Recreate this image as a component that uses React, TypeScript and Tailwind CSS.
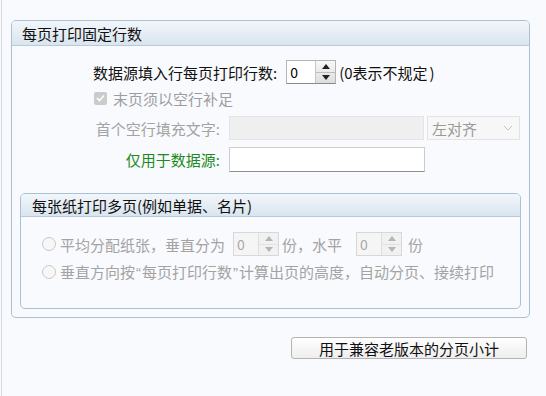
import React from "react";

const font = { fontFamily: '"Noto Sans CJK SC", "Noto Sans", sans-serif' };
const latin = { fontFamily: '"Liberation Sans", sans-serif' };

function Spinner({ disabled, w }: { disabled?: boolean; w: number }) {
  const tri = disabled ? "#b5b5b5" : "#222";
  return (
    <div
      className={`flex h-[24px] border ${disabled ? "border-[#d8d8d8] bg-[#f5f5f5]" : "border-[#b4b4b4] border-b-[#8a8a8a] bg-white"}`}
      style={{ width: w }}
    >
      <div className={`flex-1 flex items-center pl-[3px] text-[14px] leading-none ${disabled ? "text-[#a8a8a8]" : "text-black"}`}>0</div>
      <div className={`w-[20px] flex flex-col border-l ${disabled ? "border-[#dedede] bg-[#f1f1f1]" : "border-[#c6c6c6] bg-gradient-to-b from-[#f7f7f7] to-[#dedede]"}`}>
        <div className={`flex-1 flex items-center justify-center border-b ${disabled ? "border-[#e2e2e2]" : "border-[#bdbdbd]"}`}>
          <svg width="8" height="5" viewBox="0 0 8 5"><path d="M0 5 L4 0 L8 5 Z" fill={tri} /></svg>
        </div>
        <div className="flex-1 flex items-center justify-center">
          <svg width="8" height="5" viewBox="0 0 8 5"><path d="M0 0 L4 5 L8 0 Z" fill={tri} /></svg>
        </div>
      </div>
    </div>
  );
}

function Radio() {
  return <div className="w-[14px] h-[14px] rounded-full border border-[#c9c9c9] bg-[#f7f7f7]" />;
}

export default function App() {
  return (
    <div className="w-[546px] h-[396px] bg-[#f9fafd] flex" style={font}>
      <div className="w-[1px] ml-[1px] bg-[#d6dbe2]" />
      <div className="flex flex-col">
        <div className="mt-[20px] ml-[9px] w-[519px] h-[298px] border border-[#a9c1d5] rounded-[5px] overflow-hidden flex flex-col">
          <div className="h-[25px] shrink-0 bg-gradient-to-b from-[#f2f6fa] to-[#d9e5ef] border-b border-[#b6cadb] flex items-center pl-[10px] text-[15px] text-[#111] leading-none">
            每页打印固定行数
          </div>
          <div className="flex flex-col text-[15px] leading-none">
            <div className="mt-[14px] h-[24px] flex items-center pl-[81px]">
              <span className="text-[#111]">数据源填入行每页打印行数:</span>
              <div className="ml-[9px]"><Spinner w={50} /></div>
              <span className="ml-[3px] text-[#111]">(0表示不规定<span className="ml-[2px]">)</span></span>
            </div>
            <div className="mt-[4px] h-[20px] flex items-center pl-[82px]">
              <div className="w-[13px] h-[13px] rounded-[2px] bg-[#cbcbcb] flex items-center justify-center">
                <svg width="9" height="8" viewBox="0 0 9 8"><path d="M1 4 L3.5 6.5 L8 1.5" stroke="#fff" strokeWidth="1.6" fill="none" /></svg>
              </div>
              <span className="ml-[6px] text-[#9d9d9d]">末页须以空行补足</span>
            </div>
            <div className="mt-[8px] h-[24px] flex items-center">
              <div className="w-[208px] text-right text-[#a3a3a3]">首个空行填充文字:</div>
              <div className="ml-[9px] w-[195px] h-[24px] bg-[#efefef] border border-[#e4e4e4]" />
              <div className="ml-[3px] w-[93px] h-[24px] bg-[#f7f7f7] border border-[#e3e3e3] flex items-center justify-between pl-[4px] pr-[6px]">
                <span className="text-[#9a9a9a]">左对齐</span>
                <svg width="10" height="6" viewBox="0 0 10 6"><path d="M1 1 L5 5 L9 1" stroke="#c4c4c4" strokeWidth="1" fill="none" /></svg>
              </div>
            </div>
            <div className="mt-[7px] h-[25px] flex items-center">
              <div className="w-[208px] text-right text-[#1d8a1d]">仅用于数据源:</div>
              <div className="ml-[9px] w-[196px] h-[25px] bg-white border border-[#cdcdcd] border-b-[#8f8f8f]" />
            </div>
            <div className="mt-[21px] ml-[8px] w-[501px] h-[116px] border border-[#a9c1d5] rounded-[5px] overflow-hidden flex flex-col">
              <div className="h-[23px] shrink-0 bg-gradient-to-b from-[#f2f6fa] to-[#d9e5ef] border-b border-[#b6cadb] flex items-center pl-[11px] text-[#111]">
                每张纸打印多页(例如单据、名片)
              </div>
              <div className="mt-[15px] h-[24px] flex items-center pl-[21px] text-[#a3a3a3]">
                <Radio />
                <span className="ml-[4px]">平均分配纸张，垂直分为</span>
                <div className="ml-[8px]"><Spinner disabled w={46} /></div>
                <span className="ml-[3px]">份，水平</span>
                <div className="ml-[14px]"><Spinner disabled w={46} /></div>
                <span className="ml-[6px]">份</span>
              </div>
              <div className="mt-[6px] h-[20px] flex items-center pl-[21px] text-[#a3a3a3]">
                <Radio />
                <span className="ml-[4px]">
                  垂直方向按<span className="mx-[1px]" style={latin}>“</span>每页打印行数<span className="mx-[1px]" style={latin}>”</span>计算出页的高度，自动分页、接续打印
                </span>
              </div>
            </div>
          </div>
        </div>
        <div className="mt-[19px] ml-[289px] w-[236px] h-[22px] border border-[#b3b3b3] rounded-[3px] bg-gradient-to-b from-[#ffffff] to-[#eeeeee] flex items-center justify-center text-[15px] leading-none text-[#111]">
          用于兼容老版本的分页小计
        </div>
      </div>
    </div>
  );
}
